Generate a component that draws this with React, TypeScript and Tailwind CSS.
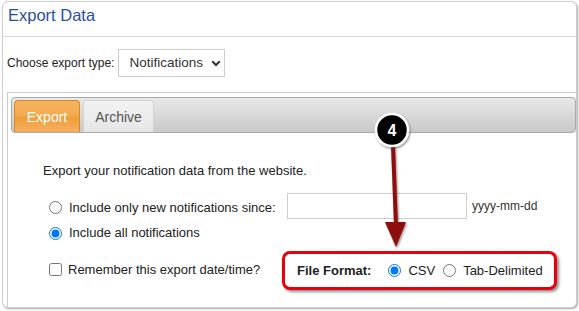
import React from "react";

export default function App() {
  return (
    <div
      className="relative w-[579px] h-[311px] bg-white overflow-hidden pt-[1px] pl-[2px] text-[#333]"
      style={{ fontFamily: '"Liberation Sans", Arial, sans-serif' }}
    >
      <div className="w-[575px] h-[307px] border border-[#cfcfcf] rounded-[6px] shadow-[1px_1px_2px_rgba(0,0,0,0.35)] flex flex-col bg-white">
        {/* Title */}
        <div className="h-[35px] pt-[2px] pl-[5px] leading-[22px] text-[16.5px] text-[#2a4ea6] border-b border-[#dcdcdc] shrink-0">
          Export Data
        </div>
        {/* Export type */}
        <div className="mt-[12px] pl-[4px] flex items-center gap-[4px] h-[28px] shrink-0">
          <span className="text-[12px] text-[#222]">Choose export type:</span>
          <div className="w-[107px] h-[28px] border border-[#cccccc] bg-white flex items-center pl-[10px] text-[13.5px] text-[#333]">
            <span className="w-[82px]">Notifications</span>
            <svg width="10" height="7" viewBox="0 0 10 7" className="mt-[1px]">
              <path d="M1.2 1.2 L5 5 L8.8 1.2" fill="none" stroke="#333" strokeWidth="2" />
            </svg>
          </div>
        </div>
        {/* Tab panel */}
        <div className="mt-[15px] ml-[4px] flex-1 border-l border-t border-[#cccccc] pt-[4px] pl-[3px] flex flex-col">
          <div className="h-[36px] border border-[#a9a9a9] rounded-[4px] bg-[linear-gradient(#e8e8e8,#c9c9c9)] flex items-end pl-[2px] gap-[3px] shrink-0">
            <div className="w-[66px] h-[32px] rounded-t-[4px] border border-b-0 border-[#d28b2c] bg-[linear-gradient(#f6b360_0%,#f4ab50_45%,#f09e38_55%,#f5b163_100%)] text-white text-[14px] flex items-center justify-center pt-[1px]">
              Export
            </div>
            <div className="w-[71px] h-[32px] rounded-t-[4px] border border-b-0 border-[#d2d2d2] bg-[linear-gradient(#f2f2f2,#e6e6e6)] text-[#555] text-[14px] flex items-center justify-center pt-[1px]">
              Archive
            </div>
          </div>
          <div className="pl-[32px] text-[13px] text-[#222]">
            <div className="mt-[30px] leading-[16px]">Export your notification data from the website.</div>
            <div className="mt-[14px] h-[26px] flex items-center pl-[6px]">
              <input type="radio" name="r1" className="m-0 w-[13px] h-[13px] mt-[3px]" />
              <span className="ml-[7px] mt-[3px] w-[218px]">Include only new notifications since:</span>
              <input
                type="text"
                className="w-[180px] h-[26px] border border-[#cccccc] bg-white outline-none"
              />
              <span className="ml-[5px] text-[12px] text-[#333]">yyyy-mm-dd</span>
            </div>
            <div className="mt-[6px] h-[16px] flex items-center pl-[6px]">
              <input type="radio" name="r1" defaultChecked className="m-0 w-[13px] h-[13px]" />
              <span className="ml-[7px]">Include all notifications</span>
            </div>
            <div className="mt-[10px] h-[39px] flex items-center pl-[6px]">
              <input type="checkbox" className="m-0 w-[13px] h-[13px] -mt-[2px]" />
              <span className="ml-[6px] w-[214px] -mt-[2px]">Remember this export date/time?</span>
              <div className="w-[275px] h-[39px] border-[3px] border-[#e8000b] rounded-[8px] shadow-[2px_2px_3px_rgba(0,0,0,0.45)] flex items-center pl-[12px] bg-white">
                <span className="font-bold">File Format:</span>
                <input type="radio" name="r2" defaultChecked className="m-0 ml-[17px] w-[13px] h-[13px]" />
                <span className="ml-[7px]">CSV</span>
                <input type="radio" name="r2" className="m-0 ml-[8px] w-[13px] h-[13px]" />
                <span className="ml-[7px]">Tab-Delimited</span>
              </div>
            </div>
          </div>
        </div>
      </div>

      {/* Annotation: badge and arrow */}
      <svg className="absolute left-0 top-0 pointer-events-none" width="579" height="311" viewBox="0 0 579 311">
        <defs>
          <filter id="sh" x="-50%" y="-50%" width="200%" height="200%">
            <feDropShadow dx="1" dy="1.5" stdDeviation="1.2" floodColor="#000" floodOpacity="0.45" />
          </filter>
        </defs>
        <g filter="url(#sh)">
          <line x1="393" y1="146" x2="396" y2="226" stroke="#8e0a0a" strokeWidth="4" />
          <polygon points="385,222 406,222 396,247" fill="#8e0a0a" />
          <circle cx="392" cy="130" r="16" fill="#000" stroke="#fff" strokeWidth="2.5" />
        </g>
        <text x="392" y="136" textAnchor="middle" fill="#fff" fontSize="16" fontWeight="bold" fontFamily="Liberation Sans, Arial, sans-serif">
          4
        </text>
      </svg>
    </div>
  );
}
